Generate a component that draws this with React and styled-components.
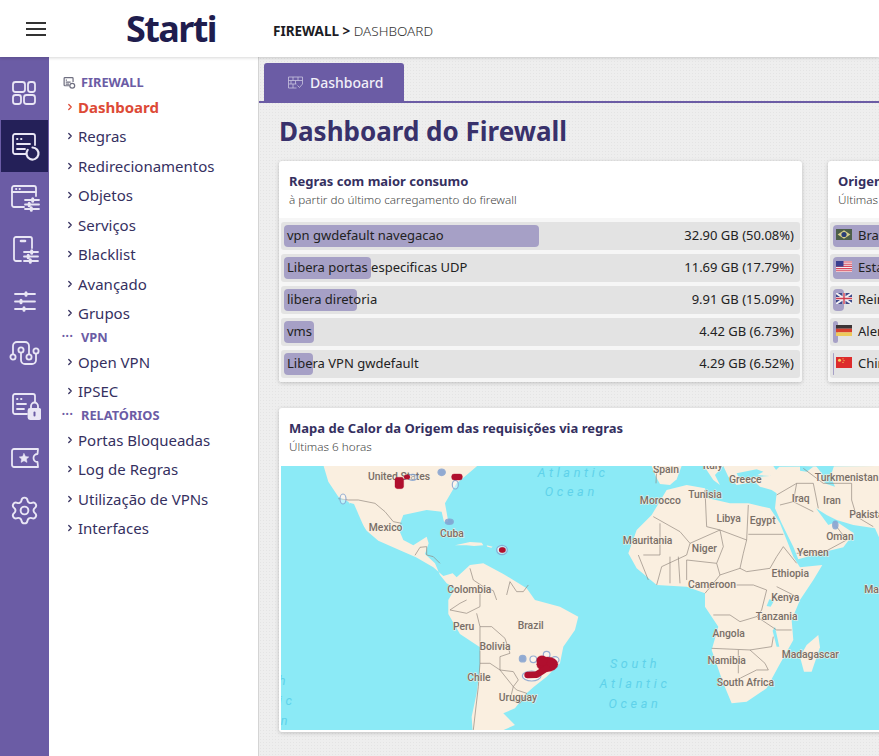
import React from 'react';
import styled, { createGlobalStyle } from 'styled-components';
import { ChevronRight, Settings } from 'lucide-react';

const PURPLE = '#6b5ca5';
const INK = '#35305f';

const GlobalStyle = createGlobalStyle`
  html, body {
    margin: 0;
    height: 100%;
    overflow: hidden;
    background: #ededed;
    font-family: "Noto Sans", "Open Sans", sans-serif;
  }
  * { box-sizing: border-box; }
`;

const Page = styled.div`
  display: flex;
  flex-direction: column;
  height: 100vh;
  overflow: hidden;
`;

const Header = styled.header`
  position: relative;
  z-index: 2;
  display: flex;
  align-items: center;
  flex: none;
  height: 57px;
  background: #fff;
  box-shadow: 0 1px 3px rgba(0, 0, 0, 0.16);
`;

const Burger = styled.div`
  display: flex;
  flex-direction: column;
  gap: 4.5px;
  width: 20px;
  margin: 1px 0 0 26px;
  span {
    height: 1.5px;
    background: #333;
  }
`;

const Logo = styled.div`
  margin-left: 80px;
  width: 147px;
  font-family: "Noto Sans", sans-serif;
  font-size: 36px;
  font-weight: 700;
  letter-spacing: -1.6px;
  line-height: 1;
  color: #1f1d4e;
`;

const Crumb = styled.div`
  margin-top: 4px;
  font-size: 13.5px;
  color: #333;
  font-weight: 300;
  b {
    font-weight: 700;
    color: #1c1c24;
  }
`;

const Body = styled.div`
  display: flex;
  flex: 1;
  min-height: 0;
`;

const Rail = styled.nav`
  flex: none;
  width: 49px;
  padding-top: 11px;
  background: ${PURPLE};
`;

const RailItem = styled.div`
  display: flex;
  align-items: center;
  justify-content: center;
  height: 52px;
  margin-left: 1px;
  width: 47px;
  color: #e9e6f5;
  background: ${(p) =>
    p.$active
      ? 'radial-gradient(#3a3570 0.6px, transparent 0.7px) 0 0 / 2px 2px, #242058'
      : 'none'};
`;

const RailSvg = styled.svg.attrs({ viewBox: '0 0 32 32', fill: 'none' })`
  width: 32px;
  height: 32px;
  stroke: currentColor;
  stroke-width: 1.8;
  stroke-linecap: round;
  stroke-linejoin: round;
`;

const Menu = styled.aside`
  flex: none;
  width: 210px;
  padding-top: 16px;
  background: #fff;
  border-right: 1px solid #d4d4d4;
`;

const SectionTitle = styled.div`
  display: flex;
  align-items: center;
  height: 19px;
  padding: 0 0 1px 13px;
  font-size: 12.8px;
  font-weight: 700;
  color: ${PURPLE};
`;

const SectionMark = styled.span`
  display: flex;
  align-items: center;
  width: 19px;
  font-size: 7.5px;
  line-height: 1;
  letter-spacing: 1px;
`;

const MenuItem = styled.div`
  display: flex;
  align-items: center;
  height: 29.5px;
  padding-left: 16px;
  font-size: 15px;
  font-weight: ${(p) => (p.$active ? 700 : 400)};
  color: ${(p) => (p.$active ? '#dd4a36' : INK)};
  svg {
    flex: none;
    margin-right: 3px;
  }
`;

const Main = styled.main`
  flex: 1;
  min-width: 0;
  overflow: hidden;
  background: radial-gradient(#e4e4e4 0.6px, transparent 0.7px) 0 0 / 3px 3px, #eeeeee;
`;

const TabBar = styled.div`
  display: flex;
  height: 46px;
  padding: 6px 0 0 5px;
  border-bottom: 2px solid ${PURPLE};
`;

const Tab = styled.div`
  display: flex;
  align-items: center;
  gap: 7px;
  width: 140px;
  padding-left: 24px;
  font-size: 14px;
  font-weight: 500;
  color: #f1eff8;
  background: ${PURPLE};
  border-radius: 3px 3px 0 0;
`;

const Content = styled.div`
  padding: 8px 0 0 20px;
`;

const Title = styled.h1`
  margin: 0 0 10px;
  font-size: 26px;
  line-height: 40px;
  font-weight: 700;
  color: #38316b;
  white-space: nowrap;
`;

const CardRow = styled.div`
  display: flex;
  gap: 26px;
  margin-bottom: 26px;
`;

const Card = styled.section`
  flex: none;
  width: ${(p) => p.$w}px;
  background: #fff;
  border-radius: 3px;
  box-shadow: 0 1px 4px rgba(0, 0, 0, 0.2);
  overflow: hidden;
`;

const CardHead = styled.div`
  height: 57px;
  padding: 11px 10px 0;
`;

const CardTitle = styled.div`
  font-size: 13px;
  line-height: 18px;
  font-weight: 700;
  color: ${INK};
  white-space: nowrap;
`;

const CardSub = styled.div`
  font-size: 11.7px;
  line-height: 19px;
  font-weight: 300;
  color: #444;
  white-space: nowrap;
`;

const RowList = styled.div`
  display: flex;
  flex-direction: column;
  gap: 4px;
  padding: 4px 2px;
  background: #f6f6f6;
`;

const Row = styled.div`
  position: relative;
  display: flex;
  align-items: center;
  justify-content: space-between;
  height: 28px;
  padding: 0 6px 3px;
  font-size: 13px;
  color: #222;
  background: #e3e3e3;
  border-radius: 3px;
`;

const Bar = styled.div`
  position: absolute;
  left: 3px;
  top: 3px;
  bottom: 3px;
  width: ${(p) => p.$w}px;
  background: #a6a0c6;
  border-radius: 4px;
`;

const RowLabel = styled.span`
  position: relative;
  display: flex;
  align-items: center;
  gap: 6px;
`;

const RowValue = styled.span`
  position: relative;
`;

const MapSvg = styled.svg`
  display: block;
  width: 598px;
  height: 264px;
  margin: 1px 0 2px 2px;
  background: #8beaf6;
  font-family: "Roboto", "Noto Sans", sans-serif;
`;

const Land = styled.path`
  fill: #faefe0;
`;

const Water = styled.path`
  fill: #8beaf6;
`;

const Borders = styled.path`
  fill: none;
  stroke: #8f857b;
  stroke-width: 2;
  stroke-linejoin: round;
`;

const Place = styled.text`
  font-size: 31px;
  font-weight: 500;
  fill: #786e67;
  stroke: #faefe0;
  stroke-width: 3px;
  paint-order: stroke;
  text-anchor: middle;
`;

const Sea = styled.text`
  font-size: 38px;
  font-style: italic;
  letter-spacing: 11px;
  fill: #5fd2ea;
  text-anchor: middle;
`;

const Heat = styled.g`
  fill: #b00f2e;
  stroke: #b00f2e;
`;

const Halo = styled.ellipse`
  fill: ${(p) => (p.$solid ? '#7f9fd0' : 'rgba(255,255,255,0.5)')};
  stroke: #85a3d0;
  stroke-width: 3.5;
  opacity: 0.85;
`;

const FlagSvg = styled.svg.attrs({ viewBox: '0 0 16 11' })`
  flex: none;
  width: 16px;
  height: 11px;
`;

const rules = [
  { name: 'vpn gwdefault navegacao', value: '32.90 GB (50.08%)', bar: 255 },
  { name: 'Libera portas especificas UDP', value: '11.69 GB (17.79%)', bar: 87 },
  { name: 'libera diretoria', value: '9.91 GB (15.09%)', bar: 73 },
  { name: 'vms', value: '4.42 GB (6.73%)', bar: 30 },
  { name: 'Libera VPN gwdefault', value: '4.29 GB (6.52%)', bar: 29 }
];

const BrFlag = () => (
  <FlagSvg>
    <rect width="16" height="11" fill="#4d5f4a" />
    <path d="M8 1.2 14.4 5.5 8 9.8 1.6 5.5Z" fill="#d8cf8a" />
    <circle cx="8" cy="5.5" r="2.6" fill="#2b3f78" />
  </FlagSvg>
);

const UsFlag = () => (
  <FlagSvg>
    <rect width="16" height="11" fill="#f3eef0" />
    <path d="M0 1h16M0 3.2h16M0 5.4h16M0 7.6h16M0 9.8h16" stroke="#d9475a" strokeWidth="1.1" />
    <rect width="7.5" height="5.6" fill="#3a3f8f" />
  </FlagSvg>
);

const UkFlag = () => (
  <FlagSvg>
    <rect width="16" height="11" fill="#3d4a8a" />
    <path d="M0 0 16 11M16 0 0 11" stroke="#f1eef2" strokeWidth="2" />
    <path d="M8 0v11M0 5.5h16" stroke="#f1eef2" strokeWidth="3" />
    <path d="M8 0v11M0 5.5h16" stroke="#cf3c4e" strokeWidth="1.4" />
  </FlagSvg>
);

const DeFlag = () => (
  <FlagSvg>
    <rect width="16" height="3.7" fill="#3b3436" />
    <rect y="3.7" width="16" height="3.7" fill="#d8412f" />
    <rect y="7.4" width="16" height="3.6" fill="#eeca5a" />
  </FlagSvg>
);

const CnFlag = () => (
  <FlagSvg>
    <rect width="16" height="11" fill="#dd2b2b" />
    <circle cx="3.5" cy="3.2" r="1.5" fill="#f4d35e" />
    <circle cx="7" cy="1.8" r="0.6" fill="#f4d35e" />
    <circle cx="8" cy="3.6" r="0.6" fill="#f4d35e" />
    <circle cx="7" cy="5.4" r="0.6" fill="#f4d35e" />
  </FlagSvg>
);

const origins = [
  { name: 'Brasil', value: '38.10 GB (58.01%)', bar: 440, Flag: BrFlag },
  { name: 'Estados Unidos', value: '17.22 GB (26.21%)', bar: 200, Flag: UsFlag },
  { name: 'Reino Unido', value: '1.61 GB (2.45%)', bar: 11, Flag: UkFlag },
  { name: 'Alemanha', value: '0.72 GB (1.10%)', bar: 5, Flag: DeFlag },
  { name: 'China', value: '0.13 GB (0.20%)', bar: 1, Flag: CnFlag }
];

const firewallItems = ['Regras', 'Redirecionamentos', 'Objetos', 'Serviços', 'Blacklist', 'Avançado', 'Grupos'];

const Sliders = ({ x = 0, y = 0, w = 14, gap = 5 }) => (
  <g transform={`translate(${x} ${y})`}>
    <path d={`M0 0h${w}M0 ${gap}h${w}M0 ${gap * 2}h${w}`} />
    <path d={`M${w * 0.55} -1.2v2.4M${w * 0.3} ${gap - 1.2}v2.4M${w * 0.45} ${gap * 2 - 1.2}v2.4`} strokeWidth="3" />
  </g>
);

const railIcons = [
  <RailSvg key="dash">
    <rect x="4" y="4" width="12" height="10" rx="2.5" />
    <rect x="19" y="4" width="7" height="10" rx="2.5" />
    <rect x="4" y="17" width="8" height="9" rx="2.5" />
    <rect x="15" y="17" width="11" height="9" rx="2.5" />
  </RailSvg>,
  <RailSvg key="fw">
    <path d="M17 24H6a2 2 0 0 1-2-2V6a2 2 0 0 1 2-2h18a2 2 0 0 1 2 2v9" />
    <path d="M8 9h.5M12 9h.5M8 14h13M8 19h8" />
    <path d="M23.5 17.5a6 6 0 1 1-4.8 2.4" strokeWidth="2.2" />
  </RailSvg>,
  <RailSvg key="win">
    <path d="M15 25H5a2 2 0 0 1-2-2V6a2 2 0 0 1 2-2h20a2 2 0 0 1 2 2v8" />
    <path d="M3 10h24M7 7h.4M10.5 7h.4" />
    <Sliders x="16" y="18" w="14" gap="4.5" />
  </RailSvg>,
  <RailSvg key="phone">
    <path d="M12 27H7a2 2 0 0 1-2-2V5a2 2 0 0 1 2-2h14a2 2 0 0 1 2 2v9" />
    <path d="M12 7h4" strokeWidth="2.6" />
    <Sliders x="15" y="18" w="14" gap="4.5" />
  </RailSvg>,
  <RailSvg key="sliders">
    <Sliders x="6" y="8" w="20" gap="7.5" />
  </RailSvg>,
  <RailSvg key="net">
    <circle cx="4" cy="19" r="2.6" />
    <circle cx="12" cy="12" r="2.6" />
    <circle cx="20" cy="19" r="2.6" />
    <circle cx="27" cy="13" r="2.6" />
    <path d="M4 16V8a4 4 0 0 1 4-4h8a4 4 0 0 1 4 4v8" />
    <path d="M12 15v7a4 4 0 0 0 4 4h7a4 4 0 0 0 4-4v-6" />
  </RailSvg>,
  <RailSvg key="lock">
    <path d="M18 24H6a2 2 0 0 1-2-2V6a2 2 0 0 1 2-2h18a2 2 0 0 1 2 2v6" />
    <path d="M8 9h.5M12 9h.5M8 14h9M8 19h7" />
    <path d="M22 19v-3a3.500 3.500 0 0 1 7 0v3" />
    <rect x="19.500" y="19" width="12" height="10" rx="1.500" fill="currentColor" />
    <path d="M25.500 22.500v3" stroke="#6b5ca5" strokeWidth="2" />
  </RailSvg>,
  <RailSvg key="ticket">
    <path d="M5 7h24l-.5 5a4 4 0 0 0 0 8l.5 5H5a2 2 0 0 1-2-2V9a2 2 0 0 1 2-2Z" />
    <path d="m15 11.500 1.500 3 3.300.4-2.400 2.200.6 3.300-3-1.600-3 1.600.6-3.300-2.400-2.200 3.300-.4Z" fill="currentColor" strokeWidth="0.500" />
  </RailSvg>,
  <Settings key="gear" size={31} strokeWidth={1.5} />
];

const WorldMap = () => (
  <MapSvg viewBox="281 466 598 264">
    {/* americas, drawn in a 3x grid */}
    <g transform="translate(270 400) scale(0.3333)">
      <Land d="M160 195 175 245 205 290 235 305 262 350 290 392 325 422 400 455 438 472 490 502 520 528 548 520 560 532 600 495 640 490 700 522 770 565 795 600 870 620 925 650 915 690 880 740 870 790 830 830 790 862 770 880 750 905 735 925 700 940 735 975 690 995 608 995 605 950 620 880 630 800 630 742 570 702 535 642 535 600 555 565 530 550 510 525 495 490 465 462 476 430 470 410 430 436 400 420 385 385 400 345 470 330 515 335 522 365 535 365 525 310 560 250 590 225 625 195Z" />
      <Water d="M238 308 252 312 285 388 270 378 245 335Z" />
      <Land d="M555 436 600 426 635 428 640 436 612 438 590 436Z" />
      <Land d="M650 436 668 440 664 443 652 440Z" />
      <Land d="M682 444 708 448 702 458 686 456Z" />
      <Borders d="M205 296 235 300 265 300 315 310 345 335 370 365 395 370M435 466 450 442 470 440 470 465 490 470 510 490M600 505 610 540 640 560 670 572 680 600M630 580 630 620 590 640 540 630 570 610 590 600M620 640 630 680 665 680 705 715 720 760 690 770 690 810 660 790 630 790 625 860 610 990M630 680 630 720 630 790M690 810 730 815 745 840 730 860 690 810M730 860 740 870 770 880 750 910 720 900 730 860M710 585 720 545 740 575 760 575 775 555" />
      <Sea x="909" y="231">Atlantic</Sea>
      <Sea x="904" y="288">Ocean</Sea>
      <Sea x="42" y="856">h</Sea>
      <Sea x="52" y="914">ic</Sea>
      <Sea x="48" y="974">n</Sea>
      <Place x="387" y="239">United States</Place>
      <Place x="347" y="394">Mexico</Place>
      <Place x="546" y="412">Cuba</Place>
      <Place x="598" y="579">Colombia</Place>
      <Place x="581" y="691">Peru</Place>
      <Place x="782" y="687">Brazil</Place>
      <Place x="675" y="751">Bolivia</Place>
      <Place x="627" y="842">Chile</Place>
      <Place x="744" y="902">Uruguay</Place>
      <Halo cx="219" cy="297" rx="9" ry="15" />
      <Halo cx="515" cy="217" rx="11" ry="10" $solid />
      <Halo cx="556" cy="254" rx="9" ry="13" />
      <Halo cx="428" cy="232" rx="14" ry="9" />
      <Halo cx="538" cy="365" rx="12" ry="8" $solid />
      <Halo cx="696" cy="450" rx="16" ry="14" />
      <Halo cx="758" cy="776" rx="10" ry="10" $solid />
      <Halo cx="830" cy="764" rx="10" ry="10" />
      <Halo cx="855" cy="780" rx="12" ry="10" />
      <Halo cx="790" cy="778" rx="10" ry="10" />
      <Halo cx="785" cy="828" rx="28" ry="15" />
      <Heat>
        <rect x="375" y="232" width="26" height="34" rx="7" />
        <rect x="545" y="222" width="32" height="18" rx="7" />
        <ellipse cx="411" cy="231" rx="9" ry="7" />
        <ellipse cx="697" cy="450" rx="10" ry="8" />
        <ellipse cx="832" cy="793" rx="32" ry="22" />
        <ellipse cx="816" cy="782" rx="16" ry="15" />
        <path d="M773 825 800 824 830 805" fill="none" strokeWidth="20" strokeLinecap="round" strokeLinejoin="round" />
      </Heat>
    </g>
    {/* europe, africa and the middle east, same 3x grid */}
    <g transform="translate(580 440) scale(0.3333)">
      <Land d="M215 225 260 150 320 135 375 145 385 175 450 190 505 190 570 205 600 250 620 300 640 350 660 382 727 375 700 420 660 480 635 540 640 600 595 680 560 745 500 785 455 790 430 730 395 630 415 560 375 500 375 460 320 440 230 435 170 385 145 340 170 270Z" />
      <Land d="M215 78 305 78 290 118 270 135 240 132 228 110Z" />
      <Land d="M372 78 430 78 405 105 420 135 400 120Z" />
      <Land d="M430 78 580 78 595 100 570 108 530 105 500 130 470 135 445 110Z" />
      <Land d="M510 112 570 108 598 80 900 78 900 298 885 265 820 255 770 240 740 225 708 205 745 255 770 245 822 280 790 322 735 335 655 358 640 320 605 250 585 205 590 160 575 150 540 140Z" />
      <Water d="M470 100 530 88 550 95 510 118 480 120Z" />
      <Water d="M708 78 762 78 752 108 765 140 740 132 722 118 725 100Z" />
      <Water d="M660 78 700 80 680 95 660 92Z" />
      <Land d="M715 585 720 622 695 695 672 695 660 650 680 615Z" />
      <Water d="M582 482 568 478 560 498 572 500Z" />
      <Water d="M585 560 598 620 590 620 578 572Z" />
      <Borders d="M220 230 300 275 330 310 420 270 500 300 505 195M505 283 610 283M375 150 380 260 420 270M240 250 240 345 190 345M330 310 320 345 245 380 230 435M420 270 430 320 410 370 320 360 320 420M410 370 420 405 480 385 500 395 570 385 590 350 610 320 650 370M480 385 490 340 500 300M420 405 400 430 375 460M470 435 520 435 560 450 545 510 530 530M590 440 650 470M400 525 450 525 480 545 530 530 590 570 635 570M395 625 510 630 575 620 580 590M475 630 475 700M510 630 555 670 565 690 530 690 480 715M590 165 650 130 700 130M650 130 640 185 700 215M600 195 640 185M700 130 715 205M815 130 815 180 830 230 880 260M770 260 800 300 735 335M650 340 735 335M670 85 730 130 815 130M230 88 228 130M175 345 205 420M270 350 270 430M295 350 300 430" />
      <Sea x="165" y="685">South</Sea>
      <Sea x="165" y="745">Atlantic</Sea>
      <Sea x="165" y="803">Ocean</Sea>
      <Place x="258" y="98">Spain</Place>
      <Place x="398" y="88">Italy</Place>
      <Place x="496" y="128">Greece</Place>
      <Place x="800" y="122">Turkmenistan</Place>
      <Place x="375" y="175">Tunisia</Place>
      <Place x="241" y="193">Morocco</Place>
      <Place x="662" y="187">Iraq</Place>
      <Place x="756" y="191">Iran</Place>
      <Place x="868" y="235">Pakistan</Place>
      <Place x="446" y="246">Libya</Place>
      <Place x="548" y="252">Egypt</Place>
      <Place x="780" y="299">Oman</Place>
      <Place x="203" y="313">Mauritania</Place>
      <Place x="373" y="335">Niger</Place>
      <Place x="699" y="348">Yemen</Place>
      <Place x="631" y="412">Ethiopia</Place>
      <Place x="396" y="444">Cameroon</Place>
      <Place x="616" y="482">Kenya</Place>
      <Place x="590" y="539">Tanzania</Place>
      <Place x="446" y="590">Angola</Place>
      <Place x="440" y="671">Namibia</Place>
      <Place x="691" y="655">Madagascar</Place>
      <Place x="496" y="739">South Africa</Place>
      <Place x="915" y="458">Maldives</Place>
      <Halo cx="766" cy="255" rx="8" ry="12" $solid />
    </g>
  </MapSvg>
);

const App = () => {
  return (
    <Page>
      <GlobalStyle />
      <Header>
        <Burger>
          <span />
          <span />
          <span />
        </Burger>
        <Logo>Starti</Logo>
        <Crumb>
          <b>FIREWALL</b> <b>&gt;</b> DASHBOARD
        </Crumb>
      </Header>
      <Body>
        <Rail>
          {railIcons.map((icon, i) => (
            <RailItem key={i} $active={i === 1}>
              {icon}
            </RailItem>
          ))}
        </Rail>
        <Menu>
          <SectionTitle>
            <SectionMark>
              <svg width="14" height="13" viewBox="0 0 32 32" fill="none" stroke="#6f6f80" strokeWidth="3">
                <path d="M17 24H6a2 2 0 0 1-2-2V6a2 2 0 0 1 2-2h18a2 2 0 0 1 2 2v9" />
                <path d="M8 10h3M8 15h12M8 20h8" />
                <circle cx="24" cy="24" r="6" />
              </svg>
            </SectionMark>
            FIREWALL
          </SectionTitle>
          <MenuItem $active>
            <ChevronRight size={10} strokeWidth={3} />
            Dashboard
          </MenuItem>
          {firewallItems.map((item) => (
            <MenuItem key={item}>
              <ChevronRight size={10} strokeWidth={3} />
              {item}
            </MenuItem>
          ))}
          <SectionTitle>
            <SectionMark>•••</SectionMark>
            VPN
          </SectionTitle>
          {['Open VPN', 'IPSEC'].map((item) => (
            <MenuItem key={item}>
              <ChevronRight size={10} strokeWidth={3} />
              {item}
            </MenuItem>
          ))}
          <SectionTitle>
            <SectionMark>•••</SectionMark>
            RELATÓRIOS
          </SectionTitle>
          {['Portas Bloqueadas', 'Log de Regras', 'Utilização de VPNs', 'Interfaces'].map((item) => (
            <MenuItem key={item}>
              <ChevronRight size={10} strokeWidth={3} />
              {item}
            </MenuItem>
          ))}
        </Menu>
        <Main>
          <TabBar>
            <Tab>
              <svg width="15" height="13" viewBox="0 0 15 13" fill="none" stroke="#c9c4e0" strokeWidth="0.8">
                <path d="M.5 1h14v7M.5 1v11h8M.5 4.500h14M.5 8h8M5 1v3.500M10 1v3.500M3 4.500V8M7.500 4.500V8M5 8v4" />
                <path d="m9.500 9.500 2 2 3-3.500" />
              </svg>
              Dashboard
            </Tab>
          </TabBar>
          <Content>
            <Title>Dashboard do Firewall</Title>
            <CardRow>
              <Card $w={523}>
                <CardHead>
                  <CardTitle>Regras com maior consumo</CardTitle>
                  <CardSub>à partir do último carregamento do firewall</CardSub>
                </CardHead>
                <RowList>
                  {rules.map((rule) => (
                    <Row key={rule.name}>
                      <Bar $w={rule.bar} />
                      <RowLabel>{rule.name}</RowLabel>
                      <RowValue>{rule.value}</RowValue>
                    </Row>
                  ))}
                </RowList>
              </Card>
              <Card $w={523}>
                <CardHead>
                  <CardTitle>Origem das requisições</CardTitle>
                  <CardSub>Últimas 6 horas</CardSub>
                </CardHead>
                <RowList>
                  {origins.map((origin) => (
                    <Row key={origin.name}>
                      <Bar $w={origin.bar} />
                      <RowLabel>
                        <origin.Flag />
                        {origin.name}
                      </RowLabel>
                      <RowValue>{origin.value}</RowValue>
                    </Row>
                  ))}
                </RowList>
              </Card>
            </CardRow>
            <Card $w={1072}>
              <CardHead>
                <CardTitle>Mapa de Calor da Origem das requisições via regras</CardTitle>
                <CardSub>Últimas 6 horas</CardSub>
              </CardHead>
              <WorldMap />
            </Card>
          </Content>
        </Main>
      </Body>
    </Page>
  );
};

export default App;
